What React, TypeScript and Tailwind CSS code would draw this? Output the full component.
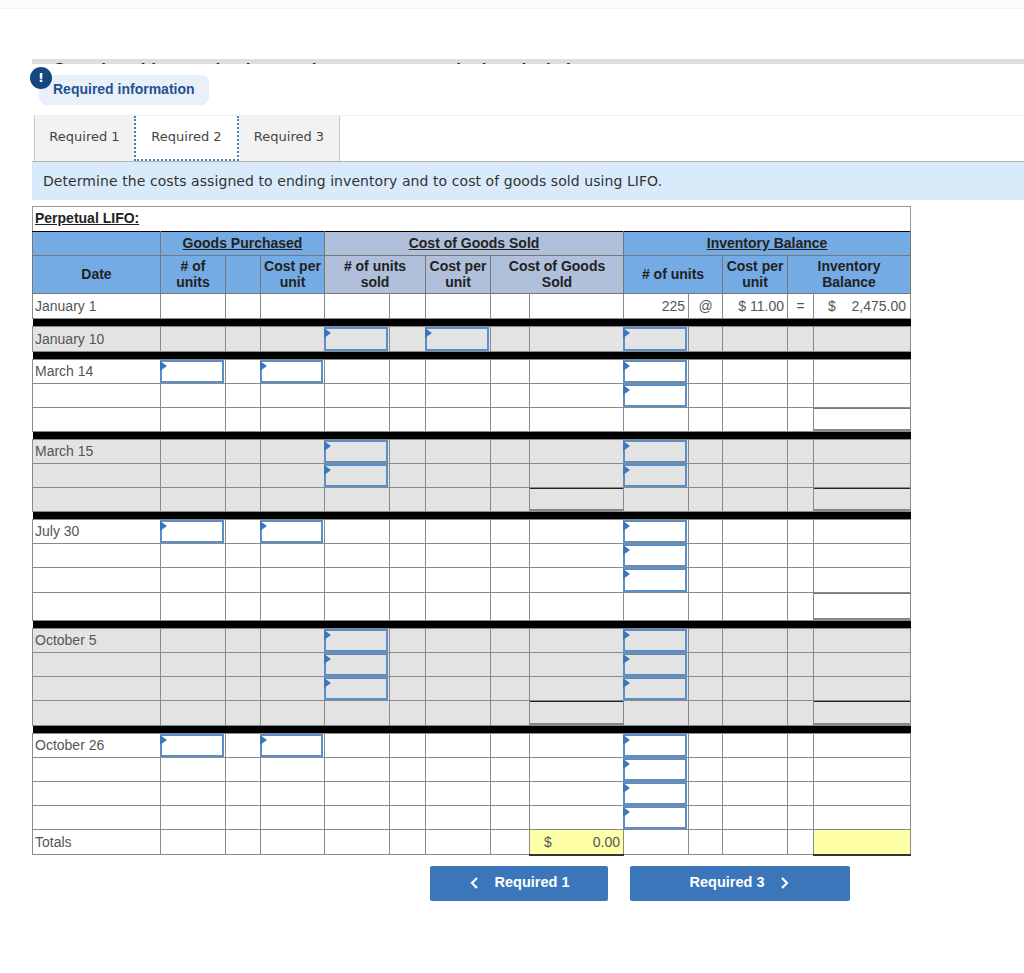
const sans = "font-['Liberation_Sans',Arial,sans-serif]";
const colWidths = [128, 65, 35, 64, 65, 36, 65, 39, 94, 65, 34, 65, 26, 97];

interface RowSpec {
    label?: string;
    height: number;
    shaded?: boolean;
    inputs?: number[];
    rules?: number[];
}

const GP_UNITS = 1;
const GP_COST = 3;
const SOLD_UNITS = 4;
const SOLD_COST = 6;
const COGS = 8;
const BAL_UNITS = 9;
const BAL_TOTAL = 13;

const groups: RowSpec[][] = [
    [{ label: "January 10", height: 25, shaded: true, inputs: [SOLD_UNITS, SOLD_COST, BAL_UNITS] }],
    [
        { label: "March 14", height: 24, inputs: [GP_UNITS, GP_COST, BAL_UNITS] },
        { height: 24, inputs: [BAL_UNITS] },
        { height: 24, rules: [BAL_TOTAL] },
    ],
    [
        { label: "March 15", height: 24, shaded: true, inputs: [SOLD_UNITS, BAL_UNITS] },
        { height: 24, shaded: true, inputs: [SOLD_UNITS, BAL_UNITS] },
        { height: 24, shaded: true, rules: [COGS, BAL_TOTAL] },
    ],
    [
        { label: "July 30", height: 24, inputs: [GP_UNITS, GP_COST, BAL_UNITS] },
        { height: 24, inputs: [BAL_UNITS] },
        { height: 25, inputs: [BAL_UNITS] },
        { height: 28, rules: [BAL_TOTAL] },
    ],
    [
        { label: "October 5", height: 24, shaded: true, inputs: [SOLD_UNITS, BAL_UNITS] },
        { height: 24, shaded: true, inputs: [SOLD_UNITS, BAL_UNITS] },
        { height: 24, shaded: true, inputs: [SOLD_UNITS, BAL_UNITS] },
        { height: 25, shaded: true, rules: [COGS, BAL_TOTAL] },
    ],
    [
        { label: "October 26", height: 24, inputs: [GP_UNITS, GP_COST, BAL_UNITS] },
        { height: 24, inputs: [BAL_UNITS] },
        { height: 24, inputs: [BAL_UNITS] },
        { height: 24, inputs: [BAL_UNITS] },
    ],
];

function EntryBox({ height }: { height: number }) {
    return (
        <div style={{ height }} className="relative ml-[-1px] w-full border-2 border-[#5c8fca]">
            <span className="absolute left-[-2px] top-[-1px] h-0 w-0 border-y-[5px] border-l-[7px] border-y-transparent border-l-[#3b76ba]" />
        </div>
    );
}

function LedgerRow({ row }: { row: RowSpec }) {
    return (
        <tr style={{ height: row.height }} className={row.shaded ? "bg-[#e3e3e3]" : "bg-white"}>
            {colWidths.map((_, i) => {
                const hasInput = row.inputs?.includes(i);
                const hasRule = row.rules?.includes(i);
                const border = i === 1 || i === 4 || i === 9 ? "border-l-[#444]" : "border-l-[#8a8a8a]";
                return (
                    <td key={i} className={`border border-[#8a8a8a] p-0 text-[14px] text-[#555] ${border} ${i === 0 ? "pl-[2px]" : ""}`}>
                        {i === 0 && row.label}
                        {hasInput && <EntryBox height={row.height - 1} />}
                        {hasRule && (
                            <div
                                style={{ height: row.height - 1 }}
                                className={`border-t border-b-2 border-b-[#888] ${row.shaded ? "border-t-[#222]" : "border-t-[#777]"}`}
                            />
                        )}
                    </td>
                );
            })}
        </tr>
    );
}

function BlackBar() {
    return (
        <tr className="h-[8px]">
            <td colSpan={14} className="bg-black p-0" />
        </tr>
    );
}

function HeaderCell({ children, span, rows, bg }: { children?: React.ReactNode; span?: number; rows?: number; bg: string }) {
    return (
        <th colSpan={span} rowSpan={rows} className={`border border-[#777] border-t-black p-0 pb-[1px] text-center text-[14px] font-bold leading-[16px] text-[#222] ${bg}`}>
            {children}
        </th>
    );
}

function Ledger() {
    const blue = "bg-[#75abe5]";
    const slate = "bg-[#b0bfda]";
    return (
        <table className={`w-[878px] table-fixed border-collapse ${sans}`}>
            <colgroup>
                {colWidths.map((w, i) => (
                    <col key={i} style={{ width: w }} />
                ))}
            </colgroup>
            <thead>
                <tr className="h-[24px]">
                    <HeaderCell bg={blue} />
                    <HeaderCell span={3} bg={blue}><span className="underline">Goods Purchased</span></HeaderCell>
                    <HeaderCell span={5} bg={slate}><span className="underline">Cost of Goods Sold</span></HeaderCell>
                    <HeaderCell span={5} bg={blue}><span className="underline">Inventory Balance</span></HeaderCell>
                </tr>
                <tr className="h-[38px]">
                    <HeaderCell bg={blue}>Date</HeaderCell>
                    <HeaderCell bg={blue}># of<br />units</HeaderCell>
                    <HeaderCell bg={blue} />
                    <HeaderCell bg={blue}>Cost per<br />unit</HeaderCell>
                    <HeaderCell span={2} bg={slate}># of units<br />sold</HeaderCell>
                    <HeaderCell bg={slate}>Cost per<br />unit</HeaderCell>
                    <HeaderCell span={2} bg={slate}>Cost of Goods<br />Sold</HeaderCell>
                    <HeaderCell span={2} bg={blue}># of units</HeaderCell>
                    <HeaderCell bg={blue}>Cost per<br />unit</HeaderCell>
                    <HeaderCell span={2} bg={blue}>Inventory<br />Balance</HeaderCell>
                </tr>
            </thead>
            <tbody>
                <tr className="h-[25px] bg-white text-[14px] text-[#555]">
                    <td className="border border-[#8a8a8a] border-t-black p-0 pl-[2px]">January 1</td>
                    <td className="border border-[#8a8a8a] border-t-black border-l-black p-0" />
                    <td className="border border-[#8a8a8a] border-t-black p-0" />
                    <td className="border border-[#8a8a8a] border-t-black p-0" />
                    <td className="border border-[#8a8a8a] border-t-black border-l-black p-0" />
                    <td className="border border-[#8a8a8a] border-t-black p-0" />
                    <td className="border border-[#8a8a8a] border-t-black p-0" />
                    <td className="border border-[#8a8a8a] border-t-black p-0" />
                    <td className="border border-[#8a8a8a] border-t-black p-0" />
                    <td className="border border-[#8a8a8a] border-t-black border-l-black p-0 pr-[3px] text-right">225</td>
                    <td className="border border-[#8a8a8a] border-t-black p-0 text-center">@</td>
                    <td className="border border-[#8a8a8a] border-t-black p-0 pr-[3px] text-right">$ 11.00</td>
                    <td className="border border-[#8a8a8a] border-t-black p-0 text-center">=</td>
                    <td className="border border-[#8a8a8a] border-t-black p-0 pl-[14px] pr-[4px]">
                        <div className="flex justify-between"><span>$</span><span>2,475.00</span></div>
                    </td>
                </tr>
                {groups.map((group, g) => [
                    <BlackBar key={`bar-${g}`} />,
                    ...group.map((row, r) => <LedgerRow key={`${g}-${r}`} row={row} />),
                ])}
                <tr className="h-[25px] bg-white text-[14px] text-[#555]">
                    {colWidths.map((_, i) => (
                        <td key={i} className={`border border-[#8a8a8a] p-0 ${i === 0 ? "pl-[2px]" : ""} ${i === COGS || i === BAL_TOTAL ? "border-b-2 border-b-[#333] bg-[#ffffa8]" : ""} ${i === 1 || i === 4 || i === 9 ? "border-l-black" : ""}`}>
                            {i === 0 && "Totals"}
                            {i === COGS && (
                                <div className="flex justify-between pl-[14px] pr-[3px] pt-[1px]"><span>$</span><span>0.00</span></div>
                            )}
                        </td>
                    ))}
                </tr>
            </tbody>
        </table>
    );
}

function Chevron({ flip }: { flip?: boolean }) {
    return (
        <svg width="10" height="14" viewBox="0 0 10 14" fill="none" stroke="white" strokeWidth="2.2" className={flip ? "rotate-180" : ""}>
            <path d="M8 2 L3 7 L8 12" />
        </svg>
    );
}

export default function App() {
    const tab = "flex h-full items-center justify-center";
    return (
        <div className="min-h-[973px] w-[1024px] overflow-hidden bg-white font-['DejaVu_Sans',sans-serif]">
            <div className="h-[9px] border-b border-[#f2f2f2] bg-[#fbfbfb]" />

            <div className="ml-[32px] mt-[50px] h-[5px] overflow-hidden bg-[#dedede]">
                <p className={`ml-[21px] mt-[1px] whitespace-nowrap text-[17px] font-bold leading-[20px] text-[#222] ${sans}`}>
                    Complete this question by entering your answers in the tabs below.
                </p>
            </div>

            <div className="relative ml-[39px] mt-[11px] flex h-[30px] w-[170px] items-center rounded-lg bg-[#e9f0f9] pb-[1px] pl-[14px]">
                <span className="absolute left-[-9px] top-[-8px] flex h-[22px] w-[22px] items-center justify-center rounded-full bg-[#14477f] text-[13px] font-bold text-white">!</span>
                <span className={`text-[14px] font-bold text-[#1f5391] ${sans}`}>Required information</span>
            </div>

            <div className="ml-[32px] mt-[10px] border-t border-[#eeeeee]">
                <div className="ml-[2px] flex h-[45px] text-[13px] text-[#444]">
                    <div className={`${tab} w-[100px] border-l border-[#c8c8c8] bg-[#f2f2f2] pb-[4px]`}>Required 1</div>
                    <div className={`${tab} w-[105px] border-x-2 border-b-2 border-dotted border-[#4a7fbd] bg-white pb-[2px]`}>Required 2</div>
                    <div className={`${tab} w-[101px] border-r border-[#c8c8c8] bg-[#f2f2f2] pb-[4px]`}>Required 3</div>
                </div>
                <div className="flex h-[39px] items-center border-t border-[#b5b5b5] bg-[#d9ebfa] pl-[11px] text-[14px] tracking-[0.07px] text-[#333]">
                    Determine the costs assigned to ending inventory and to cost of goods sold using LIFO.
                </div>
                <div className="mt-[6px] w-[878px]">
                    <p className={`flex h-[25px] w-[879px] items-center border-x border-t border-[#999] pb-[1px] pl-[2px] text-[14px] font-bold text-[#222] underline ${sans}`}>Perpetual LIFO:</p>
                    <Ledger />
                </div>
            </div>

            <div className={`ml-[430px] mt-[10px] flex gap-[22px] text-[14.5px] font-bold text-white ${sans}`}>
                <button className="flex h-[35px] w-[178px] items-center justify-center gap-[16px] rounded-[2px] bg-[#3b76ba]">
                    <Chevron /> Required 1
                </button>
                <button className="flex h-[35px] w-[220px] items-center justify-center gap-[16px] rounded-[2px] bg-[#3b76ba]">
                    Required 3 <Chevron flip />
                </button>
            </div>
        </div>
    );
}
